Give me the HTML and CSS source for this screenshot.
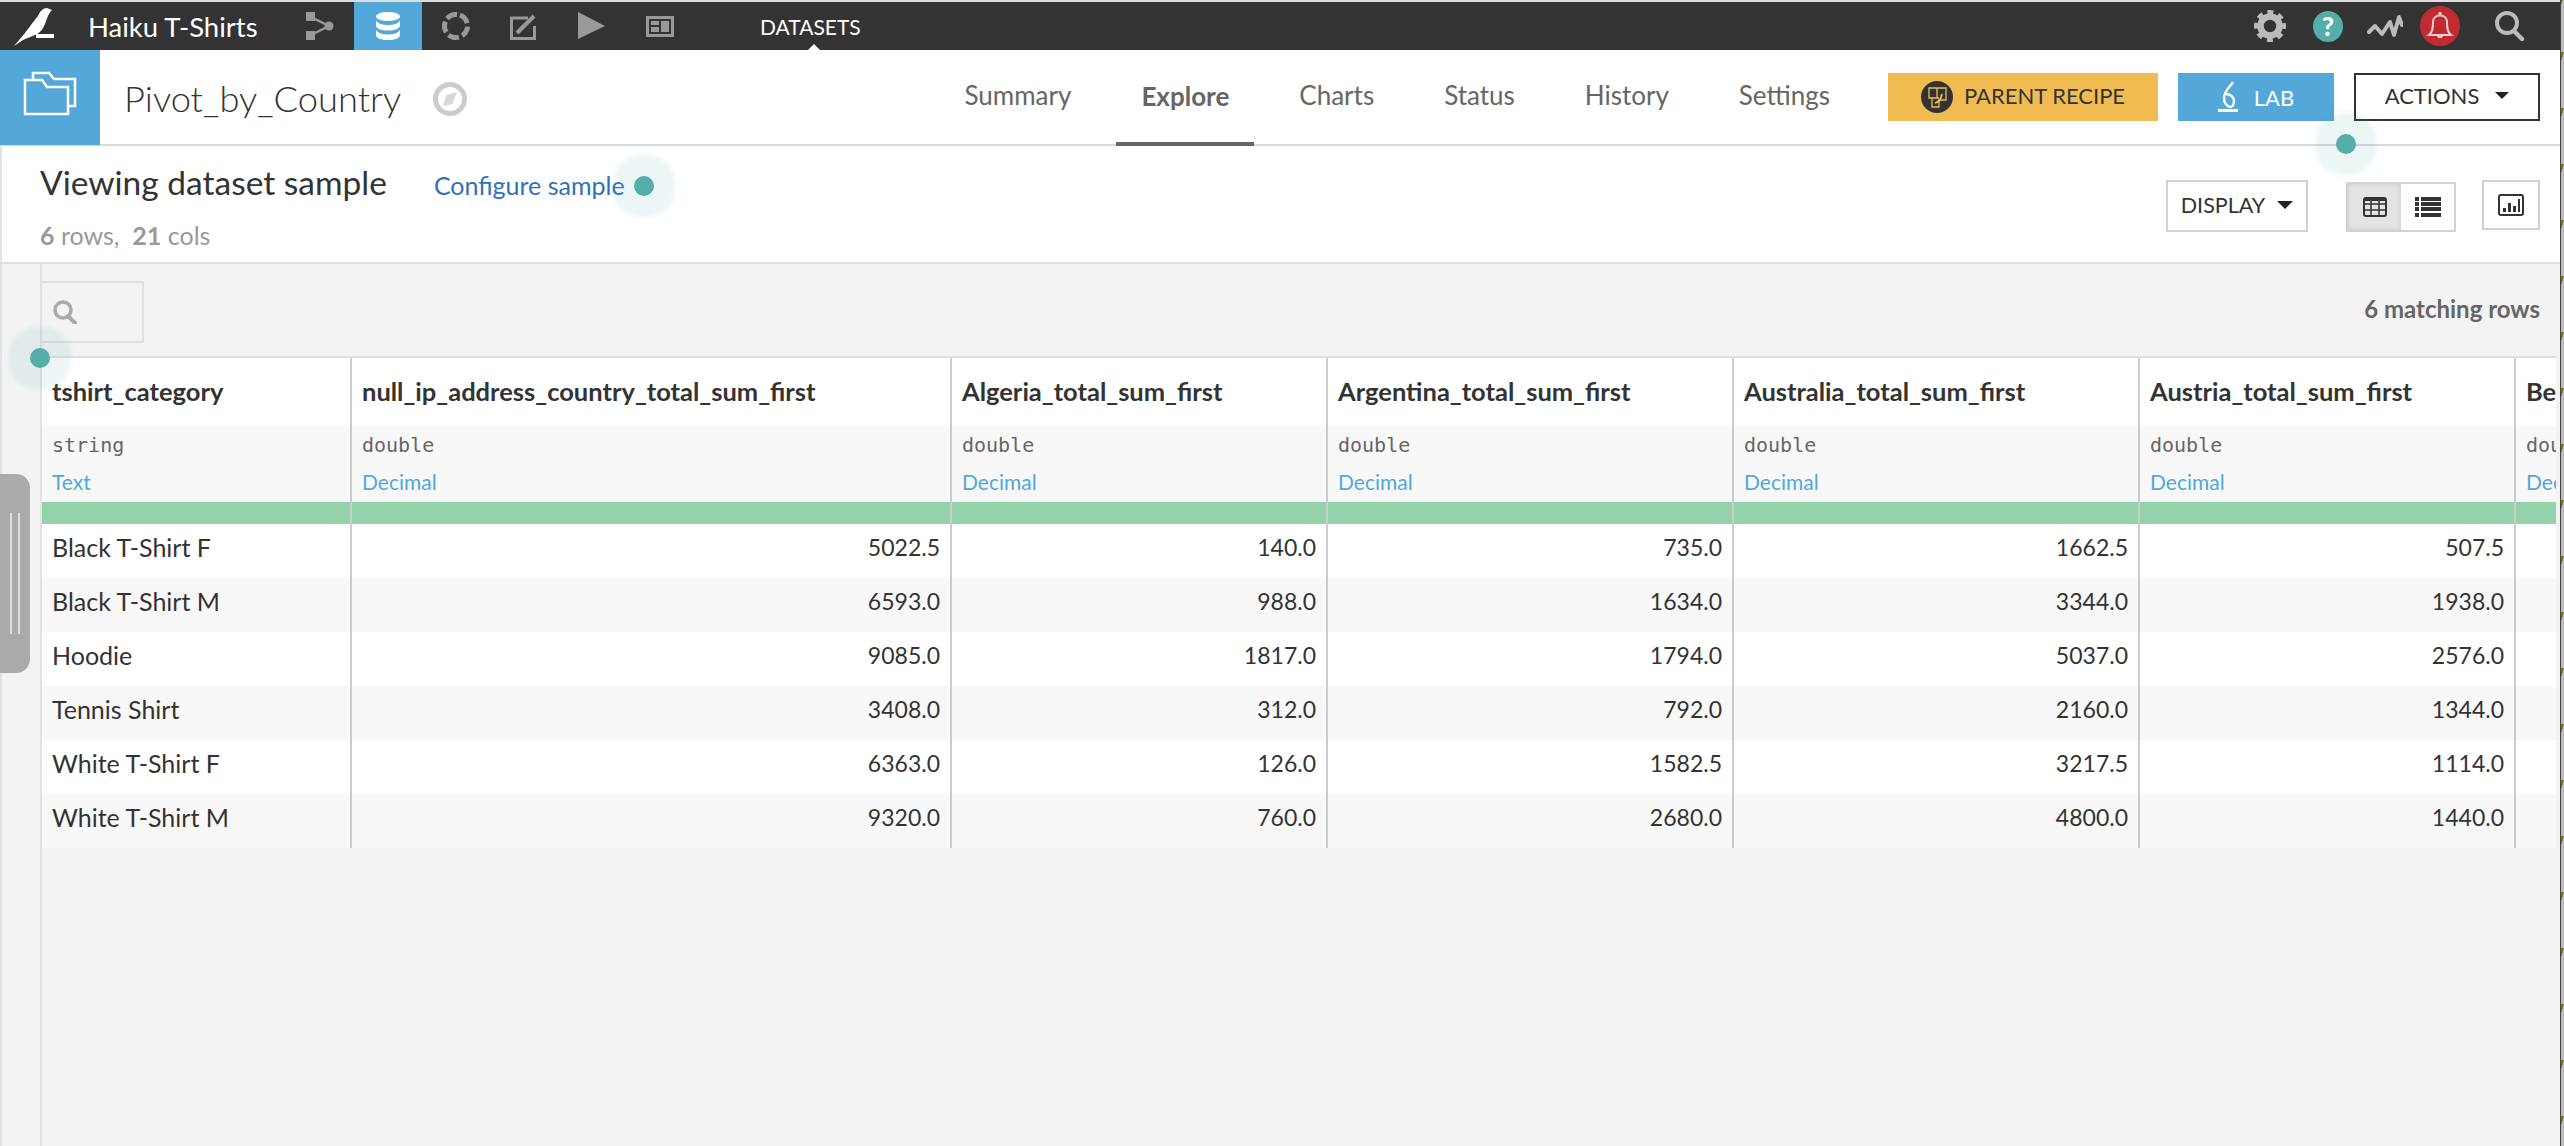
FILE: index.html
```html
<!DOCTYPE html>
<html lang="en">
<head>
    <meta charset="UTF-8">
    <title>Pivot_by_Country - Explore</title>
    <link rel="stylesheet" href="styles.css">
</head>
<body>
<div class="page">
    <div class="app">
        <header class="topbar">
            <div class="brand">
                <svg class="brand-logo" width="54" height="48" viewBox="0 0 54 48">
                    <path fill="#fff" d="M52 8 L47 6 C43 6 40 9 38 14 C33 20 28 27 25 31 L14 44 L23 38 L35 33 C40 31 43 27 45 22 C47 17 48 12 52 8Z"/>
                    <rect fill="#fff" x="36" y="32" width="18" height="4"/>
                </svg>
                <span class="brand-name">Haiku T-Shirts</span>
            </div>
            <nav class="nav-icons">
                <a class="nav-item">
                    <svg width="68" height="48" viewBox="0 0 68 48">
                        <rect fill="#999" x="20" y="10" width="9" height="9"/>
                        <rect fill="#999" x="20" y="29" width="9" height="9"/>
                        <circle fill="#999" cx="43" cy="24" r="4.5"/>
                        <path stroke="#999" stroke-width="2.5" fill="none" d="M25 15 L43 24 L25 33"/>
                    </svg>
                </a>
                <a class="nav-item nav-item-active">
                    <svg width="68" height="48" viewBox="0 0 68 48">
                        <ellipse fill="#fff" cx="34" cy="14.5" rx="12" ry="4.5"/>
                        <path fill="#fff" d="M22 18.5 V23.5 C22 26.5 27 28.5 34 28.5 S46 26.5 46 23.5 V18.5 C44 21.5 40 23 34 23 S24 21.5 22 18.5Z"/>
                        <path fill="#fff" d="M22 28 V33 C22 36 27 38 34 38 S46 36 46 33 V28 C44 31 40 32.5 34 32.5 S24 31 22 28Z"/>
                    </svg>
                </a>
                <a class="nav-item">
                    <svg width="68" height="48" viewBox="0 0 68 48">
                        <circle cx="34" cy="24" r="11.5" fill="none" stroke="#999" stroke-width="5" stroke-dasharray="11 3.45" transform="rotate(-70 34 24)"/>
                    </svg>
                </a>
                <a class="nav-item">
                    <svg width="68" height="48" viewBox="0 0 68 48">
                        <path fill="none" stroke="#999" stroke-width="3" d="M38 16 H21.5 V36.5 H44.5 V24"/>
                        <path fill="none" stroke="#999" stroke-width="4" d="M27 31 L44 14"/>
                    </svg>
                </a>
                <a class="nav-item">
                    <svg width="68" height="48" viewBox="0 0 68 48">
                        <polygon fill="#999" points="20,10 47,24 20,37"/>
                    </svg>
                </a>
                <a class="nav-item">
                    <svg width="68" height="48" viewBox="0 0 68 48">
                        <rect x="21.5" y="15.5" width="25" height="18" fill="none" stroke="#999" stroke-width="3"/>
                        <rect fill="#999" x="25" y="19" width="8" height="4"/>
                        <rect fill="#999" x="25" y="25" width="8" height="5"/>
                        <rect fill="#999" x="35" y="19" width="8" height="11"/>
                    </svg>
                </a>
            </nav>
            <span class="nav-label">DATASETS</span>
            <div class="top-icons">
                <span class="top-icon">
                    <svg width="32" height="32" viewBox="0 0 32 32">
                        <circle cx="16" cy="16" r="9.5" fill="none" stroke="#bbb" stroke-width="6.5"/>
                        <circle cx="16" cy="16" r="13.5" fill="none" stroke="#bbb" stroke-width="5" stroke-dasharray="5.6 5" transform="rotate(-12 16 16)"/>
                    </svg>
                </span>
                <span class="top-icon"><span class="help-badge">?</span></span>
                <span class="top-icon top-icon-wave">
                    <svg width="36" height="24" viewBox="0 0 36 24">
                        <polyline fill="none" stroke="#bbb" stroke-width="4" stroke-linejoin="round" stroke-linecap="round" points="2,18 8,12 15,20 23,8 27,21 32,3 35,11"/>
                    </svg>
                </span>
                <span class="top-icon top-icon-bell">
                    <svg width="40" height="40" viewBox="0 0 40 40">
                        <circle cx="20" cy="20" r="20" fill="#c02b31"/>
                        <path fill="none" stroke="#f3cdcd" stroke-width="2" d="M9 29 C13 26 13 21 13 16 C13 12 16 9.500 20 9.500 C24 9.500 27 12 27 16 C27 21 27 26 31 29Z"/>
                        <circle cx="20" cy="7.500" r="1.800" fill="#f3cdcd"/>
                        <path fill="#f3cdcd" d="M17 30 H23 C22.500 33 17.500 33 17 30Z"/>
                    </svg>
                </span>
                <span class="top-icon top-icon-search">
                    <svg width="30" height="30" viewBox="0 0 30 30">
                        <circle cx="12" cy="12" r="10" fill="none" stroke="#bbb" stroke-width="4"/>
                        <path stroke="#bbb" stroke-width="4.500" stroke-linecap="round" d="M19 20 L27 28"/>
                    </svg>
                </span>
            </div>
        </header>

        <div class="subheader">
            <div class="dataset-icon">
                <svg width="100" height="95" viewBox="0 0 100 95">
                    <path fill="none" stroke="#fff" stroke-width="2.500" d="M33 29 V23 H49 L54 29 H75 V56 H68"/>
                    <path fill="none" stroke="#fff" stroke-width="2.500" d="M25 30 H42 L47 37 H68 V64 H25Z"/>
                </svg>
            </div>
            <h1 class="dataset-name">Pivot_by_Country</h1>
            <svg class="compass" width="34" height="34" viewBox="0 0 34 34">
                <circle cx="17" cy="17" r="14.500" fill="none" stroke="#ccc" stroke-width="5"/>
                <polygon fill="#d8d8d8" points="24,10 19.500,22 10,24 13.500,13"/>
            </svg>
            <nav class="tabs">
                <a class="tab">Summary</a>
                <a class="tab tab-active">Explore</a>
                <a class="tab">Charts</a>
                <a class="tab">Status</a>
                <a class="tab">History</a>
                <a class="tab">Settings</a>
            </nav>
            <div class="actions">
                <a class="btn btn-parent">
                    <svg width="32" height="32" viewBox="0 0 32 32">
                        <circle cx="16" cy="16" r="16" fill="#333"/>
                        <path fill="none" stroke="#f0bc52" stroke-width="1.300" d="M8 7 H25 V19 H18 V26 H11 V17 H8Z M8 17 H18 M16 7 V17"/>
                        <path fill="none" stroke="#f0bc52" stroke-width="1.800" d="M14 22 C18 21 20 18 21 13"/>
                    </svg>
                    PARENT RECIPE
                </a>
                <a class="btn btn-lab">
                    <svg width="20" height="32" viewBox="0 0 20 32">
                        <path fill="none" stroke="#fff" stroke-width="2.400" d="M15 1 C12 6 6 10 6 17 C6 22 9 25 12 26 M8 13 C12 13 16 16 16 20 C16 24 14 26 12 26"/>
                        <rect fill="#fff" x="0" y="28" width="20" height="3"/>
                    </svg>
                    LAB
                </a>
                <a class="btn btn-actions">ACTIONS <span class="caret"></span></a>
            </div>
        </div>

        <section class="sample-bar">
            <div class="sample-info">
                <div class="sample-title">
                    <h2>Viewing dataset sample</h2>
                    <a class="sample-link">Configure sample</a>
                </div>
                <div class="sample-count"><b>6</b> rows,&nbsp; <b>21</b> cols</div>
            </div>
            <div class="view-tools">
                <a class="tool-btn tool-display">DISPLAY <span class="caret caret-display"></span></a>
                <div class="view-toggle">
                    <a class="toggle-item toggle-item-on">
                        <svg width="24" height="20" viewBox="0 0 24 20">
                            <rect x="1" y="1" width="22" height="18" rx="2" fill="none" stroke="#333" stroke-width="2"/>
                            <path stroke="#333" stroke-width="1.500" d="M1 7 H23 M1 13 H23 M8 1 V19 M16 1 V19"/>
                            <rect x="1" y="1" width="22" height="3" fill="#333"/>
                        </svg>
                    </a>
                    <a class="toggle-item">
                        <svg width="26" height="20" viewBox="0 0 26 20">
                            <path fill="#333" d="M0 0 H4 V4 H0Z M6 0 H26 V4 H6Z M0 5 H4 V9 H0Z M6 5 H26 V9 H6Z M0 10 H4 V14 H0Z M6 10 H26 V14 H6Z M0 16 H4 V20 H0Z M6 16 H26 V20 H6Z"/>
                        </svg>
                    </a>
                </div>
                <a class="tool-btn tool-chart">
                    <svg width="26" height="22" viewBox="0 0 26 22">
                        <rect x="1" y="1" width="24" height="20" rx="2" fill="none" stroke="#333" stroke-width="2"/>
                        <path fill="#333" d="M5 14 H8 V18 H5Z M10 9 H13 V18 H10Z M15 12 H18 V18 H15Z M20 5 H22 V18 H20Z"/>
                    </svg>
                </a>
            </div>
        </section>

        <main class="data-area">
            <div class="data-inner">
                <div class="table-tools">
                    <div class="search-box">
                        <svg width="24" height="24" viewBox="0 0 24 24">
                            <circle cx="10" cy="10" r="8" fill="none" stroke="#aaa" stroke-width="3.500"/>
                            <path stroke="#aaa" stroke-width="4" stroke-linecap="round" d="M15 16 L22 23"/>
                        </svg>
                    </div>
                    <span class="match-count">6 matching rows</span>
                </div>
                <div class="table-wrap">
                    <table class="data-table">
                        <colgroup>
                            <col class="col-a"><col class="col-b"><col class="col-c"><col class="col-d"><col class="col-d"><col class="col-c"><col class="col-e">
                        </colgroup>
                        <thead>
                            <tr class="row-name">
                                <th>tshirt_category</th>
                                <th>null_ip_address_country_total_sum_first</th>
                                <th>Algeria_total_sum_first</th>
                                <th>Argentina_total_sum_first</th>
                                <th>Australia_total_sum_first</th>
                                <th>Austria_total_sum_first</th>
                                <th>Belgium_total_sum_first</th>
                            </tr>
                            <tr class="row-type">
                                <th><code>string</code><a>Text</a></th>
                                <th><code>double</code><a>Decimal</a></th>
                                <th><code>double</code><a>Decimal</a></th>
                                <th><code>double</code><a>Decimal</a></th>
                                <th><code>double</code><a>Decimal</a></th>
                                <th><code>double</code><a>Decimal</a></th>
                                <th><code>double</code><a>Decimal</a></th>
                            </tr>
                            <tr class="row-valid">
                                <th></th><th></th><th></th><th></th><th></th><th></th><th></th>
                            </tr>
                        </thead>
                        <tbody>
                            <tr><td>Black T-Shirt F</td><td>5022.5</td><td>140.0</td><td>735.0</td><td>1662.5</td><td>507.5</td><td></td></tr>
                            <tr><td>Black T-Shirt M</td><td>6593.0</td><td>988.0</td><td>1634.0</td><td>3344.0</td><td>1938.0</td><td></td></tr>
                            <tr><td>Hoodie</td><td>9085.0</td><td>1817.0</td><td>1794.0</td><td>5037.0</td><td>2576.0</td><td></td></tr>
                            <tr><td>Tennis Shirt</td><td>3408.0</td><td>312.0</td><td>792.0</td><td>2160.0</td><td>1344.0</td><td></td></tr>
                            <tr><td>White T-Shirt F</td><td>6363.0</td><td>126.0</td><td>1582.5</td><td>3217.5</td><td>1114.0</td><td></td></tr>
                            <tr><td>White T-Shirt M</td><td>9320.0</td><td>760.0</td><td>2680.0</td><td>4800.0</td><td>1440.0</td><td></td></tr>
                        </tbody>
                    </table>
                </div>
            </div>
        </main>
    </div>
    <div class="window-edge"></div>
</div>

<div class="side-handle"><span></span></div>
<span class="hint hint-sample"></span>
<span class="hint hint-lab"></span>
<span class="hint hint-table"></span>
</body>
</html>
```

FILE: styles.css
```css
html, body {
    height: 100%;
    margin: 0;
    padding: 0;
}
body {
    font-family: Lato, "Open Sans", sans-serif;
    color: #333;
    overflow: hidden;
    background-color: #f3f3f3;
}
h1, h2 {
    margin: 0;
    font-weight: normal;
}
svg {
    display: block;
}
.page {
    display: flex;
    height: 100%;
}
.app {
    flex: 1;
    display: flex;
    flex-direction: column;
    min-width: 0;
    border-top: 2px solid #ddd;
}
.window-edge {
    width: 4px;
    box-sizing: border-box;
    border-left: 1px solid #444;
    background-color: #bbb;
    background-image: linear-gradient(106.7deg, #7a7420 2.87px, transparent 2.87px);
    background-size: 3px 56px;
    background-position: 0 52px;
    background-repeat: repeat-y;
}

/* top bar */
.topbar {
    height: 48px;
    display: flex;
    align-items: center;
    background-color: #333;
    flex-shrink: 0;
}
.brand {
    width: 286px;
    display: flex;
    align-items: center;
}
.brand-name {
    margin-left: 34px;
    font-size: 27.500px;
    color: #fff;
    white-space: nowrap;
}
.nav-icons {
    display: flex;
}
.nav-item {
    display: block;
    width: 68px;
    height: 48px;
}
.nav-item-active {
    background-color: #53a7d9;
}
.nav-label {
    position: relative;
    margin-left: 66px;
    font-size: 21px;
    color: #fff;
}
.nav-label::after {
    content: "";
    position: absolute;
    left: 46px;
    bottom: -13px;
    border-left: 8px solid transparent;
    border-right: 8px solid transparent;
    border-bottom: 8px solid #fff;
}
.top-icons {
    margin-left: auto;
    padding-right: 7px;
    display: flex;
    align-items: center;
}
.top-icon {
    width: 58px;
    display: flex;
    justify-content: center;
}
.top-icon-wave {
    width: 56px;
}
.top-icon-bell {
    width: 54px;
}
.top-icon-search {
    width: 86px;
}
.help-badge {
    width: 30px;
    height: 31px;
    border-radius: 50%;
    background-color: #55aeaa;
    color: #fff;
    font-size: 26px;
    font-weight: 900;
    line-height: 31px;
    text-align: center;
}

/* dataset header */
.subheader {
    height: 96px;
    box-sizing: border-box;
    display: flex;
    align-items: center;
    background-color: #fff;
    border-bottom: 2px solid #d9d9d9;
    flex-shrink: 0;
    padding-right: 20px;
}
.dataset-icon {
    width: 100px;
    height: 95px;
    background-color: #53a7d9;
    align-self: flex-start;
}
.dataset-name {
    margin: 2px 0 0 24px;
    font-size: 36.300px;
    font-weight: 300;
    color: #333;
}
.compass {
    margin-left: 32px;
    margin-top: 4px;
}
.tabs {
    margin-left: auto;
    display: flex;
    gap: 20px;
    align-self: stretch;
}
.tab {
    display: flex;
    align-items: center;
    padding: 0 25px 4px;
    font-size: 26px;
    color: #666;
}
.tab-active {
    font-weight: bold;
    border-bottom: 4px solid #666;
    padding-bottom: 0;
    margin-bottom: -2px;
}
.actions {
    margin-left: 33px;
    display: flex;
    gap: 20px;
}
.btn {
    height: 48px;
    box-sizing: border-box;
    display: flex;
    align-items: center;
    justify-content: center;
    font-size: 22px;
    white-space: nowrap;
}
.btn-parent {
    width: 270px;
    gap: 11px;
    padding-bottom: 3px;
    background-color: #f0bc52;
    color: #333;
}
.btn-parent svg {
    margin-top: 3px;
}
.btn-lab {
    width: 156px;
    gap: 16px;
    background-color: #53a7d9;
    color: #fff;
}
.btn-actions {
    width: 186px;
    gap: 16px;
    padding-bottom: 3px;
    border: 2px solid #333;
    color: #333;
}
.caret {
    width: 0;
    height: 0;
    border-left: 7px solid transparent;
    border-right: 7px solid transparent;
    border-top: 7px solid #222;
}
.caret-display {
    border-left-width: 8px;
    border-right-width: 8px;
    border-top-width: 8px;
}

/* sample bar */
.sample-bar {
    height: 118px;
    box-sizing: border-box;
    display: flex;
    justify-content: space-between;
    padding: 0 20px 0 38px;
    background-color: #fff;
    border-left: 2px solid #e2e2e2;
    border-bottom: 2px solid #e0e0e0;
    flex-shrink: 0;
}
.sample-title {
    display: flex;
    align-items: baseline;
    gap: 47px;
    margin-top: 16px;
}
.sample-title h2 {
    font-size: 33.500px;
    color: #333;
}
.sample-link {
    font-size: 25px;
    color: #2f72b9;
}
.sample-count {
    margin-top: 18px;
    font-size: 25px;
    color: #999;
}
.view-tools {
    display: flex;
    align-items: flex-start;
    padding-top: 34px;
}
.tool-btn {
    box-sizing: border-box;
    display: flex;
    align-items: center;
    justify-content: center;
    border: 2px solid #d2d2d2;
    background-color: #fff;
}
.tool-display {
    width: 142px;
    height: 52px;
    gap: 12px;
    padding-bottom: 2px;
    font-size: 21.500px;
    color: #333;
}
.tool-chart {
    width: 58px;
    height: 50px;
    margin-left: 26px;
}
.view-toggle {
    display: flex;
    width: 110px;
    height: 50px;
    box-sizing: border-box;
    margin: 2px 0 0 38px;
    border: 2px solid #d2d2d2;
}
.toggle-item {
    flex: 1;
    display: flex;
    align-items: center;
    justify-content: center;
}
.toggle-item-on {
    background-color: #e4e4e4;
    box-shadow: inset 0 0 5px rgba(0, 0, 0, 0.12);
}

/* data area */
.data-area {
    flex: 1;
    min-height: 0;
    padding-left: 38px;
    background-color: #f3f3f3;
    border-left: 2px solid #e2e2e2;
}
.data-inner {
    height: 100%;
    border-left: 2px solid #e2e2e2;
}
.table-tools {
    height: 92px;
    box-sizing: border-box;
    padding: 17px 20px 0 0;
    display: flex;
    justify-content: space-between;
}
.search-box {
    width: 104px;
    height: 62px;
    box-sizing: border-box;
    margin-left: -2px;
    padding: 17px 0 0 11px;
    border: 2px solid #e0e0e0;
}
.match-count {
    margin-top: 13px;
    font-size: 24px;
    font-weight: bold;
    color: #666;
}
.table-wrap {
    width: 2514px;
    overflow: hidden;
}
.data-table {
    width: 2514px;
    table-layout: fixed;
    border-collapse: separate;
    border-spacing: 0;
    border-top: 2px solid #e0e0e0;
}
.col-a { width: 310px; }
.col-b { width: 600px; }
.col-c { width: 376px; }
.col-d { width: 406px; }
.col-e { width: 40px; }
.data-table th, .data-table td {
    padding: 0 10px;
    border-right: 2px solid #ccc;
    overflow: hidden;
    white-space: nowrap;
    text-align: left;
    box-sizing: border-box;
}
.data-table th:last-child, .data-table td:last-child {
    border-right: 0;
    padding-right: 0;
}
.row-name th {
    height: 68px;
    padding-bottom: 2px;
    background-color: #fff;
    font-size: 25.500px;
    font-weight: bold;
    color: #333;
}
.row-type th {
    height: 76px;
    background-color: #f8f8f8;
    font-weight: normal;
    vertical-align: top;
}
.row-type code {
    display: block;
    margin-top: 6px;
    font-family: "DejaVu Sans Mono", monospace;
    font-size: 20px;
    line-height: 26px;
    color: #666;
}
.row-type a {
    display: block;
    margin-top: 11px;
    font-size: 21px;
    line-height: 26px;
    color: #53a7d9;
}
.row-valid th {
    height: 22px;
    padding: 0;
    background-color: #94d2ac;
}
.data-table td {
    height: 54px;
    padding: 0 10px 9px;
    font-size: 23px;
    color: #333;
    text-align: right;
    background-color: #fff;
}
.data-table td:first-child {
    font-size: 25px;
    text-align: left;
}
.data-table tbody tr:nth-child(even) td {
    background-color: #f8f8f8;
}

/* things lying on top of the page */
.side-handle {
    position: absolute;
    left: 0;
    top: 474px;
    width: 30px;
    height: 199px;
    border-radius: 0 14px 14px 0;
    background-color: #aaa;
}
.side-handle span {
    position: absolute;
    left: 10px;
    top: 39px;
    width: 6px;
    height: 121px;
    border-left: 2px solid #ddd;
    border-right: 2px solid #ddd;
}
.hint {
    position: absolute;
    width: 20px;
    height: 20px;
    border-radius: 50%;
    background-color: #55aeaa;
    box-shadow: 0 0 4px 21px rgba(85, 174, 170, 0.11);
}
.hint-sample {
    left: 634px;
    top: 176px;
}
.hint-lab {
    left: 2336px;
    top: 134px;
}
.hint-table {
    left: 30px;
    top: 348px;
}
```
